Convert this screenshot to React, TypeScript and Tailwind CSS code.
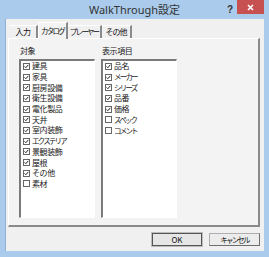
import React from "react";

const objects: [string, boolean][] = [
  ["建具", true],
  ["家具", true],
  ["厨房設備", true],
  ["衛生設備", true],
  ["電化製品", true],
  ["天井", true],
  ["室内装飾", true],
  ["エクステリア", true],
  ["景観装飾", true],
  ["屋根", true],
  ["その他", true],
  ["素材", false],
];

const columns: [string, boolean][] = [
  ["品名", true],
  ["メーカー", true],
  ["シリーズ", true],
  ["品番", true],
  ["価格", true],
  ["スペック", false],
  ["コメント", false],
];

const jp = { fontFamily: '"Noto Sans CJK JP", "Noto Sans", sans-serif' };

// katakana in the original UI font is much narrower than kanji
const textFit = (label: string) =>
  /[ァ-ヶー]/.test(label) ? "text-[7.5px] tracking-[-1.8px]" : "text-[8px] tracking-[-0.4px]";

function CheckRow({ label, checked }: { label: string; checked: boolean }) {
  return (
    <div className="flex h-[10.7px] items-center gap-[2px] whitespace-nowrap pl-[1px] leading-none text-[#222]">
      <span className="flex h-[7px] w-[7px] shrink-0 items-center justify-center border border-[#666] bg-white">
        {checked && (
          <svg width="7" height="7" viewBox="0 0 7 7">
            <path d="M0.8 3.4 L2.6 5.2 L6 1.2" fill="none" stroke="#111" strokeWidth="1.3" />
          </svg>
        )}
      </span>
      <span className={textFit(label)}>{label}</span>
    </div>
  );
}

function ListBox({ items }: { items: [string, boolean][] }) {
  return (
    <div className="h-[159px] w-[76px] border-l-2 border-t-2 border-b border-r border-l-[#7a7a7a] border-t-[#7a7a7a] border-b-white border-r-white bg-white pl-[1px]">
      {items.map(([label, checked]) => (
        <CheckRow key={label} label={label} checked={checked} />
      ))}
    </div>
  );
}

function Tab({ label, width, active }: { label: string; width: string; active?: boolean }) {
  return (
    <div
      className={
        (active
          ? "relative z-10 -mb-px h-[17px] border-l border-t border-r-2 border-l-white border-t-white border-r-[#8a8a8a] bg-[#f3f3f3] pb-[1px] "
          : "h-[13px] border-t border-r-2 border-t-white border-r-[#8a8a8a] bg-[#f0f0f0] ") +
        width +
        " flex items-center justify-center whitespace-nowrap text-[#111]"
      }
    >
      <span className={label === "その他" ? "text-[8px] tracking-[-1px]" : textFit(label)}>{label}</span>
    </div>
  );
}

export default function App() {
  return (
    <div className="h-[257px] w-[269px] bg-[#aacbeb]" style={jp}>
      <div className="relative flex h-[19px] items-center justify-center">
        <span
          className="pt-[2px] text-[11px] text-[#333]"
          style={{ fontFamily: '"Noto Sans", "Noto Sans CJK JP", sans-serif' }}
        >
          WalkThrough設定
        </span>
        <span className="absolute left-[227px] top-[2px] text-[10px] font-bold text-[#333]" style={{ fontFamily: '"Liberation Sans", sans-serif' }}>
          ?
        </span>
        <div className="absolute left-[237px] top-0 flex h-[14px] w-[27px] items-center justify-center bg-[#c75050]">
          <svg width="7" height="7" viewBox="0 0 7 7">
            <path d="M1 1 L6 6 M6 1 L1 6" stroke="white" strokeWidth="1.6" />
          </svg>
        </div>
      </div>
      <div className="mx-[5px] h-[232px] border-l border-[#8fb1d6] bg-[#f0f0f0] pl-[2px] pr-[4px] pt-[3px]">
        <div className="flex items-end pl-[2px]">
          <Tab label="入力" width="w-[28px]" />
          <Tab label="カタログ" width="w-[30px]" active />
          <Tab label="プレーヤー" width="w-[34px]" />
          <Tab label="その他" width="w-[30px]" />
        </div>
        <div className="h-[189px] border-l border-t border-r-2 border-b-2 border-l-white border-t-white border-r-[#8a8a8a] border-b-[#8a8a8a] bg-[#f3f3f3] pl-[10px] pt-[7px]">
          <div className="flex gap-[6px]">
            <div className="flex flex-col">
              <span className="mb-[3px] pl-[1px] text-[8px] leading-[10px] tracking-[-0.4px] text-[#222]">対象</span>
              <ListBox items={objects} />
            </div>
            <div className="flex flex-col">
              <span className="mb-[3px] pl-[1px] text-[8px] leading-[10px] tracking-[-0.4px] text-[#222]">表示項目</span>
              <ListBox items={columns} />
            </div>
          </div>
        </div>
        <div className="mt-[6px] flex justify-end gap-[7px]">
          <button className="flex h-[13px] w-[50px] items-center justify-center border border-[#555] bg-[#e6e6e6] text-[8px] text-[#111] outline outline-1 outline-[#bcbcbc]">
            OK
          </button>
          <button className="flex h-[13px] w-[51px] items-center justify-center border border-[#adadad] border-b-[#6d6d6d] border-r-[#6d6d6d] bg-[#ececec] text-[#111]">
            <span className="text-[7.5px] tracking-[-1.8px]">キャンセル</span>
          </button>
        </div>
      </div>
    </div>
  );
}
